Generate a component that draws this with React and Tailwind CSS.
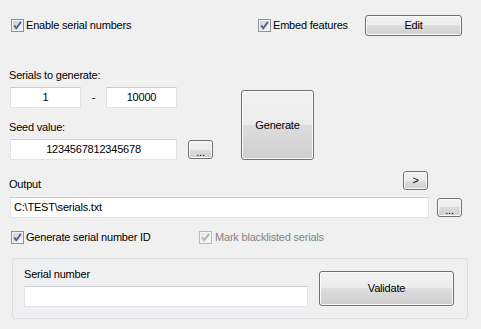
import React from "react";

const btn =
  "border border-[#707070] rounded-[3px] bg-[linear-gradient(#f2f2f2_0%,#ebebeb_50%,#dddddd_50%,#cfcfcf_100%)] shadow-[inset_0_0_0_1px_#fcfcfc] flex items-center justify-center text-black";
const box =
  "h-[21px] bg-white border border-[#e2e3ea] border-t-[#c9ccd3] flex items-center text-black";

function Check({ disabled }) {
  const stroke = disabled ? "#b8b8b8" : "#8e8f8f";
  const mark = disabled ? "#b5b5b5" : "#4a5f97";
  return (
    <svg width="13" height="13" viewBox="0 0 13 13" className="shrink-0">
      <defs>
        <linearGradient id={disabled ? "cgd" : "cg"} x1="0" y1="0" x2="1" y2="1">
          <stop offset="0" stopColor={disabled ? "#e8e8e8" : "#cdd0d5"} />
          <stop offset="1" stopColor="#f7f7f7" />
        </linearGradient>
      </defs>
      <rect x="0.5" y="0.5" width="12" height="12" fill="#f4f4f4" stroke={stroke} />
      <rect x="2" y="2" width="9" height="9" fill={`url(#${disabled ? "cgd" : "cg"})`} />
      <path d="M3.2 6.4 L5.3 9.2 L9.9 2.9" fill="none" stroke={mark} strokeWidth="1.8" />
    </svg>
  );
}

export default function App() {
  return (
    <div
      className="w-[481px] h-[329px] bg-[#f0f0f0] text-[11px] leading-[13px] tracking-[-0.2px] text-black overflow-hidden"
      style={{ fontFamily: '"Liberation Sans", Arial, sans-serif' }}
    >
      {/* row 1 */}
      <div className="flex items-center h-[21px] mt-[15px] pl-[11px]">
        <div className="w-[247px] flex items-center gap-[2px]">
          <Check />
          <span>Enable serial numbers</span>
        </div>
        <div className="w-[107px] flex items-center gap-[2px]">
          <Check />
          <span>Embed features</span>
        </div>
        <div className={`${btn} w-[97px] h-[21px]`}>Edit</div>
      </div>

      {/* serials + seed + generate */}
      <div className="flex mt-[33px]">
        <div className="w-[241px] flex flex-col">
          <div className="pl-[9px]">Serials to generate:</div>
          <div className="flex items-center mt-[5px] pl-[10px]">
            <div className={`${box} w-[71px] justify-center`}>1</div>
            <div className="w-[25px] text-center">-</div>
            <div className={`${box} w-[71px] justify-center`}>10000</div>
          </div>
          <div className="pl-[9px] mt-[13px]">Seed value:</div>
          <div className="flex items-center mt-[5px] pl-[10px]">
            <div className={`${box} w-[167px] justify-center`}>1234567812345678</div>
            <div className={`${btn} w-[25px] h-[19px] ml-[11px] items-end pb-[2px] leading-[8px]`}>...</div>
          </div>
        </div>
        <div className={`${btn} w-[73px] h-[70px] mt-[21px]`}>Generate</div>
      </div>

      {/* output */}
      <div className="flex items-end justify-between ml-[9px] w-[419px] mt-[11px]">
        <span className="leading-[13px]">Output</span>
        <div className={`${btn} w-[25px] h-[19px] mb-[1px]`}>&gt;</div>
      </div>
      <div className="flex items-center mt-[6px] pl-[10px]">
        <div className={`${box} w-[419px] pl-[3px]`}>C:\TEST\serials.txt</div>
        <div className={`${btn} w-[25px] h-[19px] ml-[8px] items-end pb-[2px] leading-[8px]`}>...</div>
      </div>

      {/* checkboxes row 2 */}
      <div className="flex items-center h-[13px] mt-[13px] pl-[11px]">
        <div className="w-[188px] flex items-center gap-[2px]">
          <Check />
          <span>Generate serial number ID</span>
        </div>
        <div className="flex items-center gap-[3px] text-[#838383]">
          <Check disabled />
          <span>Mark blacklisted serials</span>
        </div>
      </div>

      {/* group box */}
      <div className="ml-[12px] mt-[14px] w-[456px] h-[61px] border border-[#d5dfe5] rounded-[3px] flex pl-[11px]">
        <div className="flex flex-col w-[284px] mt-[9px]">
          <div>Serial number</div>
          <div className={`${box} w-[284px] mt-[5px]`}></div>
        </div>
        <div className={`${btn} w-[135px] h-[35px] ml-[11px] mt-[12px]`}>Validate</div>
      </div>
    </div>
  );
}
